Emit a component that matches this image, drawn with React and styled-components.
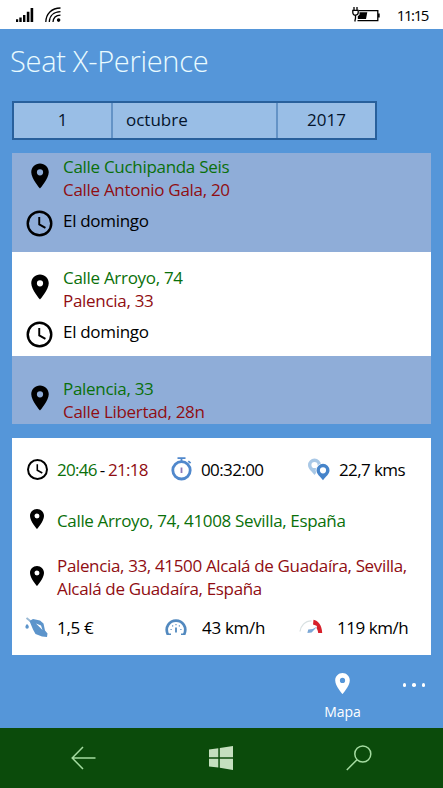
import React from "react";
import styled, { createGlobalStyle } from "styled-components";

const GREEN = "#0a700a";
const RED = "#900d12";

const trips = [
  { from: "Calle Cuchipanda Seis", to: "Calle Antonio Gala, 20", day: "El domingo", height: 99, top: 2 },
  { from: "Calle Arroyo, 74", to: "Palencia, 33", day: "El domingo", height: 104, top: 14, selected: true },
  { from: "Palencia, 33", to: "Calle Libertad, 28n", height: 68, top: 21 },
];

const PinIcon = ({ size, color = "#000" }) => (
  <svg width={size} height={size} viewBox="0 0 24 24" fill={color}>
    <path d="M12 2C8.13 2 5 5.13 5 9c0 5.25 7 13 7 13s7-7.75 7-13c0-3.87-3.13-7-7-7zm0 9.5a2.5 2.5 0 0 1 0-5 2.5 2.5 0 0 1 0 5z" />
  </svg>
);

const ClockIcon = ({ size }) => (
  <svg width={size} height={size} viewBox="0 0 24 24" fill="none" stroke="#000">
    <circle cx="12" cy="12" r="9.1" strokeWidth="1.9" />
    <path d="M11.8 7v5.7l4.8 2.7" strokeWidth="1.5" />
  </svg>
);

const SignalIcon = () => (
  <svg width="18" height="15" viewBox="0 0 18 15">
    <path d="M0 11.3h2.2V14H0zM3.3 9.6h2.4V14H3.3zM7 7h2.4v7H7zM10.8 3.7h2.6V14h-2.6zM14.6 0h2.6v14h-2.6z" />
  </svg>
);

const WifiIcon = () => (
  <svg width="17" height="16" viewBox="0 0 17 16" fill="none" stroke="#000" strokeWidth="1.3">
    <path d="M.8 15C1 7 6.5 1 15.5 1M4.3 15c.2-6 4.200-10.2 11.200-10.400M8 15c.2-4 2.800-6.700 7.500-6.900" />
    <circle cx="13.6" cy="13.1" r="1.8" fill="#000" stroke="none" />
  </svg>
);

const BatteryIcon = () => (
  <svg width="28" height="16" viewBox="0 0 28 16" fill="none" stroke="#000" strokeWidth="1.3">
    <path d="M7 3.700h18.800v9.900H5.500" />
    <path d="M26 6.500h1.700v4H26z" fill="#000" stroke="none" />
    <path d="M7.500 5.300h7.800L14 12H5.800V9.300l1.700-1.500z" fill="#000" stroke="none" />
    <path d="M2 0v3M5 0v3M.8 3.400h5.400v2.200c0 1.500-1 2.500-2.700 2.500S.8 7.100.8 5.600zM3.500 8v3.200l-.7 3.300" />
  </svg>
);

const StopwatchIcon = () => (
  <svg width="22" height="24" viewBox="0 0 22 24" fill="none" stroke="#5088cc">
    <circle cx="10.5" cy="13.3" r="8.7" strokeWidth="2.8" />
    <path d="M6.5 1.2h8M10.5 1v4" strokeWidth="1.8" />
    <path d="M17.3 4.1l2.3 2" strokeWidth="1.8" />
    <path d="M10.5 10.5v5.5" strokeWidth="1.8" stroke="#8b78b8" />
  </svg>
);

const pinShape =
  "M6.5 0A6.5 6.5 0 0 0 0 6.5c0 4 4 6.500 6.500 10 2.500-3.500 6.500-6 6.500-10A6.500 6.500 0 0 0 6.500 0zm0 3.400a3.100 3.100 0 1 1 0 6.200 3.100 3.100 0 0 1 0-6.200z";

const DistanceIcon = () => (
  <svg width="22" height="23" viewBox="0 0 22 23" fillRule="evenodd">
    <path d={pinShape} fill="#a9c8e6" transform="translate(0 .5)" />
    <circle cx="15" cy="12.5" r="7.3" fill="#fff" />
    <path d={pinShape} fill="#4684ca" transform="translate(8.5 5.8)" />
  </svg>
);

const FuelIcon = () => (
  <svg width="23" height="21" viewBox="0 0 23 21">
    <path d="M1.5 1L5 3.800l3 .3" fill="none" stroke="#9ab9d4" strokeWidth="1.8" />
    <path
      fillRule="evenodd"
      d="M4.500 4L8 2l7 1.500 3.500 3 1.500 7 2.500 3-.5 3.500-5-.5-6.500-2.600L8 12.500zM11 6.500l5 2 1.500 4.500z"
      fill="#5c94cb"
    />
    <path d="M2 7c1.200 1.200 1.800 2 1.800 3a1.700 1.700 0 0 1-3.400 0C.4 9 1 8.200 2 7z" fill="#5c94cb" />
  </svg>
);

const GaugeIcon = () => (
  <svg width="22" height="17" viewBox="0 0 22 17" fill="none" stroke="#5289bf">
    <path d="M2.800 15.500C-.5 8 4.500 1.700 11 1.700s11.500 6.300 8.200 13.800" strokeWidth="2.700" />
    <path d="M2 15.300h4M16 15.300h4" strokeWidth="1.600" />
    <path d="M5.500 10.500h1.200M15.300 10.500h1.200M7.300 6.500l.8.800M14.700 6.500l-.8.800M11 5v1.300" strokeWidth="1.1" />
    <path d="M11 8.500v5" strokeWidth="1.8" />
  </svg>
);

const MaxSpeedIcon = () => (
  <svg width="24" height="16" viewBox="0 0 24 16" fill="none">
    <path d="M1 12.500C1.500 7 6 1.800 12.500 1.800" stroke="#d9e1e2" strokeWidth="1.3" />
    <path d="M14.500.8c4.500.7 8.500 5.500 8.700 13.200h-4c-.3-2-.8-3.500-1.600-4.700l.4-2.300c-1.200-.6-2.400-1.200-4-1.600z" fill="#d7202b" />
    <path d="M18.300 7.500l-5.700 6-4.200.5.800-3.500 4.500-.6z" fill="#7ba7d5" />
  </svg>
);

const BackIcon = () => (
  <svg width="25" height="24" viewBox="0 0 25 24" fill="none" stroke="#a4dba0" strokeWidth="1.5">
    <path d="M12 1L1.200 12 12 23M1.200 12H24.500" />
  </svg>
);

const WindowsIcon = () => (
  <svg width="24" height="24" viewBox="0 0 24 24" fill="#c5dfbf">
    <path d="M0 3.500l9.300-1.300v9H0zM10.800 2L24 0v11.200H10.800zM0 12.700h9.300v8.900L0 20.400zM10.800 12.700H24V24l-13.200-2.200z" />
  </svg>
);

const SearchIcon = () => (
  <svg width="26" height="26" viewBox="0 0 26 26" fill="none" stroke="#a4dba0" strokeWidth="1.5">
    <circle cx="16.8" cy="9" r="8" />
    <path d="M11 14.700L.8 25" />
  </svg>
);

const App = () => {
  return (
    <Screen>
      <GlobalStyle />
      <StatusBar>
        <SignalIcon />
        <WifiIcon />
        <Spacer />
        <BatteryIcon />
        <Time>11:15</Time>
      </StatusBar>
      <Title>Seat X-Perience</Title>
      <DatePicker>
        <span>1</span>
        <span>octubre</span>
        <span>2017</span>
      </DatePicker>

      <TripList>
        {trips.map((trip, i) => (
          <Trip key={i} $height={trip.height} $top={trip.top} $selected={trip.selected}>
            <TripRow>
              <PinIcon size={30} />
              <div>
                <Text $color={GREEN}>{trip.from}</Text>
                <Text $color={RED}>{trip.to}</Text>
              </div>
            </TripRow>
            {trip.day && (
              <DayRow>
                <ClockIcon size={31} />
                <Text>{trip.day}</Text>
              </DayRow>
            )}
          </Trip>
        ))}
      </TripList>

      <Detail>
        <Stats $columns="30px 114px 30px 107px 31px 1fr">
          <ClockIcon size={25} />
          <Hours>
            <Text $color={GREEN} $spacing={-0.7}>20:46</Text>
            <Text>-</Text>
            <Text $color={RED} $spacing={-0.7}>21:18</Text>
          </Hours>
          <StopwatchIcon />
          <Text $spacing={-0.6}>00:32:00</Text>
          <DistanceIcon />
          <Text $spacing={-0.6}>22,7 kms</Text>
        </Stats>
        <Address $height={40}>
          <PinIcon size={24} />
          <Text $color={GREEN} $spacing={-0.35}>Calle Arroyo, 74, 41008 Sevilla, España</Text>
        </Address>
        <Address $height={73}>
          <PinIcon size={24} />
          <Text $color={RED} $spacing={-0.35}>
            Palencia, 33, 41500 Alcalá de Guadaíra, Sevilla,
            <br />
            Alcalá de Guadaíra, España
          </Text>
        </Address>
        <Stats $columns="30px 108px 37px 97px 38px 1fr" $low>
          <FuelIcon />
          <Text>1,5 €</Text>
          <GaugeIcon />
          <Text>43 km/h</Text>
          <MaxSpeedIcon />
          <Text $spacing={-0.45}>119 km/h</Text>
        </Stats>
      </Detail>

      <AppBar>
        <MapButton>
          <PinIcon size={25} color="#fff" />
          Mapa
        </MapButton>
        <More>
          <i />
          <i />
          <i />
        </More>
      </AppBar>
      <NavBar>
        <BackIcon />
        <WindowsIcon />
        <SearchIcon />
      </NavBar>
    </Screen>
  );
};

const GlobalStyle = createGlobalStyle`
  body {
    margin: 0;
  }

  * {
    box-sizing: border-box;
  }

  svg {
    display: block;
    flex-shrink: 0;
  }
`;

const Screen = styled.div`
  display: flex;
  flex-direction: column;

  width: 443px;
  height: 788px;
  overflow: hidden;

  background: #5596d9;
  color: #000;
  font-family: "Open Sans", "Noto Sans", sans-serif;
  font-size: 17px;
  line-height: 23px;
`;

const StatusBar = styled.header`
  display: flex;
  align-items: center;

  height: 29px;
  padding: 1px 15px 0 16px;

  background: #fff;

  svg + svg {
    margin-left: 11px;
  }
`;

const Spacer = styled.div`
  flex: 1;
`;

const Time = styled.span`
  margin-left: 17px;

  font-size: 15px;
  letter-spacing: -1.4px;
`;

const Title = styled.h1`
  height: 72px;
  margin: 0;
  padding: 14px 0 0 10px;

  color: #e9fbff;
  font-weight: 300;
  font-size: 29px;
  line-height: 36px;
  letter-spacing: -0.3px;
`;

const DatePicker = styled.div`
  display: grid;
  grid-template-columns: 97px 165px 1fr;
  flex-shrink: 0;

  width: 365px;
  height: 39px;
  margin-left: 12px;

  border: 2px solid #28609c;
  background: #99bee6;
  color: #04142c;
  line-height: 34px;
  text-align: center;

  span + span {
    border-left: 2px solid #6493c6;
  }

  span:nth-child(2) {
    padding-left: 13px;
    text-align: left;
  }
`;

const TripList = styled.div`
  flex-shrink: 0;

  width: 419px;
  margin: 13px 0 14px 12px;
`;

const Trip = styled.div`
  height: ${(p) => p.$height}px;
  padding: ${(p) => p.$top}px 0 0 13px;

  background: ${(p) => (p.$selected ? "#fff" : "#8fadd8")};
`;

const TripRow = styled.div`
  display: flex;
  gap: 8px;

  svg {
    margin-top: 6px;
  }
`;

const DayRow = styled.div`
  display: flex;
  gap: 8px;

  margin-top: 7px;

  svg {
    margin-left: -1px;
  }

  p {
    margin-top: 1px;
  }
`;

const Text = styled.p`
  margin: 0;

  color: ${(p) => p.$color || "#000"};
  letter-spacing: ${(p) => p.$spacing || -0.3}px;
  white-space: nowrap;
`;

const Detail = styled.section`
  flex-shrink: 0;

  width: 419px;
  height: 217px;
  margin-left: 12px;
  padding-left: 15px;

  background: #fff;
`;

const Stats = styled.div`
  display: grid;
  grid-template-columns: ${(p) => p.$columns};
  align-items: center;

  height: ${(p) => (p.$low ? 28 : 62)}px;

  > svg:first-child {
    margin-left: -2px;
  }
`;

const Hours = styled.div`
  display: flex;
  gap: 3px;
`;

const Address = styled.div`
  display: flex;
  align-items: center;
  gap: 8px;

  height: ${(p) => p.$height}px;

  svg {
    margin: -2px 0 0 -2px;
  }
`;

const AppBar = styled.div`
  display: flex;
  justify-content: flex-end;
  flex-shrink: 0;

  height: 73px;
  padding: 16px 18px 0 0;

  color: #fff;
`;

const MapButton = styled.div`
  display: flex;
  flex-direction: column;
  align-items: center;
  gap: 6px;

  width: 50px;
  margin-right: 35px;

  font-size: 14px;
  line-height: 20px;
`;

const More = styled.div`
  display: flex;
  gap: 6px;

  padding-top: 12px;

  i {
    width: 3.5px;
    height: 3.5px;
    border-radius: 50%;
    background: #fff;
  }
`;

const NavBar = styled.nav`
  display: flex;
  justify-content: space-between;
  align-items: center;
  flex-shrink: 0;

  height: 60px;
  padding: 0 71px;

  background: #0b4b0b;
`;

export default App;
